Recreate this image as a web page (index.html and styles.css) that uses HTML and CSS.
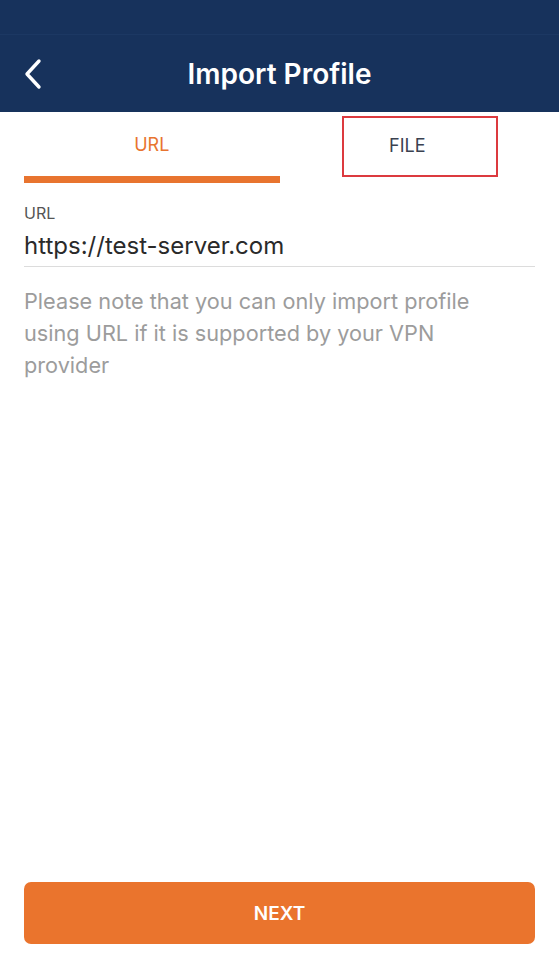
FILE: index.html
```html
<!DOCTYPE html>
<html>
<head>
<meta charset="utf-8">
<link rel="stylesheet" href="styles.css">
</head>
<body>
<div class="screen">
  <header class="header">
    <div class="status"></div>
    <div class="bar">
      <svg class="back" width="20" height="32" viewBox="0 0 20 32"><path d="M16 3 L4 16 L16 29" fill="none" stroke="#fff" stroke-width="3.4" stroke-linecap="round" stroke-linejoin="round"/></svg>
      <h1 class="title">Import Profile</h1>
    </div>
  </header>
  <nav class="tabs">
    <div class="tab active"><span class="tab-label">URL</span></div>
    <div class="tab"><span class="tab-label">FILE</span><span class="highlight"></span></div>
  </nav>
  <main class="content">
    <label class="field-label">URL</label>
    <div class="field-value">https://test-server.com</div>
    <p class="note">Please note that you can only import profile using URL if it is supported by your VPN provider</p>
  </main>
  <footer class="footer">
    <button class="next">NEXT</button>
  </footer>
</div>
</body>
</html>
```
FILE: styles.css
```css
* { box-sizing: border-box; }
html, body { margin: 0; padding: 0; background: #fff; }
body { font-family: Inter, "Noto Sans", sans-serif; }
.screen { width: 559px; height: 968px; display: flex; flex-direction: column; }
.header { background: #17325c; height: 112px; display: flex; flex-direction: column; }
.status { height: 35px; border-bottom: 1px solid #1c3863; }
.bar { flex: 1; display: flex; align-items: center; justify-content: center; position: relative; }
.back { position: absolute; left: 23px; top: 23px; }
.title { margin: 0; color: #fff; font-size: 28px; font-weight: 600; letter-spacing: 0; }
.tabs { display: flex; margin: 0 24px; height: 71px; }
.tab { flex: 1; display: flex; align-items: center; justify-content: center; position: relative; padding-bottom: 4px; }
.tab-label { font-size: 18px; color: #3a4150; }
.tab.active .tab-label { color: #e8742f; }
.tab.active { border-bottom: 7px solid #e8742f; padding-bottom: 0; }
.highlight { position: absolute; left: 62px; right: 37px; top: 4px; height: 61px; border: 2.5px solid #dc3a3f; }
.content { padding: 21px 24px 0; flex: 1; }
.field-label { display: block; font-size: 16px; color: #555; line-height: 18px; }
.field-value { font-size: 24px; color: #2a2a2a; line-height: 32px; padding: 8px 0 4px; border-bottom: 1.5px solid #dcdcdc; }
.note { margin: 18px 30px 0 0; font-size: 21.7px; line-height: 32px; color: #9c9c9c; }
.footer { padding: 0 24px 24px; }
.next { width: 100%; height: 62px; border: 0; border-radius: 7px; background: #ea742d; color: #fff; font-family: Inter, sans-serif; font-size: 19px; font-weight: 600; }
```
